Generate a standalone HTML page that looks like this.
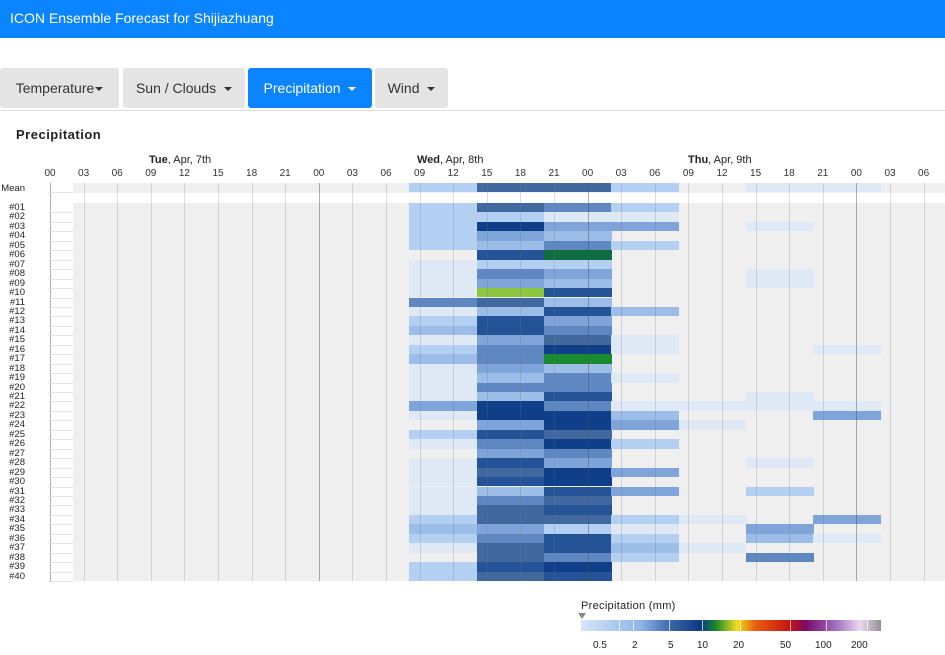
<!DOCTYPE html>
<html><head><meta charset="utf-8"><style>
body{margin:0;width:945px;height:655px;overflow:hidden;background:#fff;font-family:"Liberation Sans",sans-serif;position:relative}
.hdr{position:absolute;left:0;top:0;width:945px;height:38px;background:#0a84ff;color:#fff;font-size:14px;line-height:37px;padding-left:10px;box-sizing:border-box}
.tab{position:absolute;top:68px;height:40px;line-height:40px;background:#e4e4e4;color:#333;font-size:14px;text-align:center;border-radius:3px}
.tab.on{background:#0a84ff;color:#fff}
.car{display:inline-block;width:0;height:0;border-left:4px solid transparent;border-right:4px solid transparent;border-top:4px solid currentColor;vertical-align:middle;margin-left:4px}
.rule{position:absolute;left:0;top:110px;width:945px;height:1px;background:#ddd}
.t{position:absolute;font-size:11px;color:#222;white-space:nowrap}
.h{position:absolute;top:168px;font-size:10px;color:#333;width:30px;margin-left:-15px;text-align:center}
.rl{position:absolute;left:0;width:25px;text-align:right;font-size:9.5px;color:#222;line-height:9.45px}
#g{position:absolute;left:73px;top:183px;width:872px;height:398px;background:#efefef}
.c{position:absolute;height:9.45px}
.vl{position:absolute;top:183px;height:398px;width:1px;background:rgba(120,120,120,.25)}
</style></head><body>
<div class="hdr">ICON Ensemble Forecast for Shijiazhuang</div>
<div class="tab" style="left:0;width:119px">Temperature<span class="car" style="margin-left:1px"></span></div>
<div class="tab" style="left:123px;width:122px">Sun / Clouds <span class="car"></span></div>
<div class="tab on" style="left:248px;width:124px">Precipitation <span class="car"></span></div>
<div class="tab" style="left:375px;width:73px">Wind <span class="car"></span></div>
<div class="rule"></div>
<div class="t" style="left:16px;top:127px;font-size:13px;font-weight:bold;letter-spacing:.5px">Precipitation</div>
<div class="t" style="left:149px;top:154px"><b>Tue</b>, Apr, 7th</div>
<div class="t" style="left:417px;top:154px"><b>Wed</b>, Apr, 8th</div>
<div class="t" style="left:688px;top:154px"><b>Thu</b>, Apr, 9th</div>
<div id="hrs"><div class="h" style="left:50px">00</div><div class="h" style="left:83.6px">03</div><div class="h" style="left:117.2px">06</div><div class="h" style="left:150.8px">09</div><div class="h" style="left:184.4px">12</div><div class="h" style="left:218px">15</div><div class="h" style="left:251.6px">18</div><div class="h" style="left:285.2px">21</div><div class="h" style="left:318.8px">00</div><div class="h" style="left:352.4px">03</div><div class="h" style="left:386px">06</div><div class="h" style="left:419.6px">09</div><div class="h" style="left:453.2px">12</div><div class="h" style="left:486.8px">15</div><div class="h" style="left:520.4px">18</div><div class="h" style="left:554px">21</div><div class="h" style="left:587.6px">00</div><div class="h" style="left:621.2px">03</div><div class="h" style="left:654.8px">06</div><div class="h" style="left:688.4px">09</div><div class="h" style="left:722px">12</div><div class="h" style="left:755.6px">15</div><div class="h" style="left:789.2px">18</div><div class="h" style="left:822.8px">21</div><div class="h" style="left:856.4px">00</div><div class="h" style="left:890px">03</div><div class="h" style="left:923.6px">06</div></div>
<div id="g"></div>
<div style="position:absolute;left:48px;top:193px;width:897px;height:10px;background:#fff"></div>
<div id="cells"></div>
<div id="vls"></div>
<div class="rl" style="top:184px">Mean</div>
<div id="labels">
<div class="rl" style="top:203px">#01</div><div class="rl" style="top:212.45px">#02</div><div class="rl" style="top:221.9px">#03</div><div class="rl" style="top:231.35px">#04</div><div class="rl" style="top:240.8px">#05</div><div class="rl" style="top:250.25px">#06</div><div class="rl" style="top:259.7px">#07</div><div class="rl" style="top:269.15px">#08</div><div class="rl" style="top:278.6px">#09</div><div class="rl" style="top:288.05px">#10</div><div class="rl" style="top:297.5px">#11</div><div class="rl" style="top:306.95px">#12</div><div class="rl" style="top:316.4px">#13</div><div class="rl" style="top:325.85px">#14</div><div class="rl" style="top:335.3px">#15</div><div class="rl" style="top:344.75px">#16</div><div class="rl" style="top:354.2px">#17</div><div class="rl" style="top:363.65px">#18</div><div class="rl" style="top:373.1px">#19</div><div class="rl" style="top:382.55px">#20</div><div class="rl" style="top:392px">#21</div><div class="rl" style="top:401.45px">#22</div><div class="rl" style="top:410.9px">#23</div><div class="rl" style="top:420.35px">#24</div><div class="rl" style="top:429.8px">#25</div><div class="rl" style="top:439.25px">#26</div><div class="rl" style="top:448.7px">#27</div><div class="rl" style="top:458.15px">#28</div><div class="rl" style="top:467.6px">#29</div><div class="rl" style="top:477.05px">#30</div><div class="rl" style="top:486.5px">#31</div><div class="rl" style="top:495.95px">#32</div><div class="rl" style="top:505.4px">#33</div><div class="rl" style="top:514.85px">#34</div><div class="rl" style="top:524.3px">#35</div><div class="rl" style="top:533.75px">#36</div><div class="rl" style="top:543.2px">#37</div><div class="rl" style="top:552.65px">#38</div><div class="rl" style="top:562.1px">#39</div><div class="rl" style="top:571.55px">#40</div>
</div>
<div class="t" style="left:581px;top:600px;font-size:11px;letter-spacing:.3px">Precipitation (mm)</div>
<div style="position:absolute;left:578px;top:613px;width:0;height:0;border-left:4px solid transparent;border-right:4px solid transparent;border-top:6px solid #888"></div>
<div style="position:absolute;left:581px;top:620px;width:300px;height:11px;background:linear-gradient(90deg,#d6e6fa 0%,#8db4e6 20%,#3a66a8 30%,#0c3a80 40%,#1a8a2a 45%,#f0e020 52%,#e86010 58%,#c81010 70%,#7a0a6a 75%,#a070c0 85%,#ecd8f0 93%,#909090 100%)"></div>
<div id="tk"></div>
<div class="t" style="left:593px;top:640px;font-size:10px">0.5</div>
<div class="t" style="left:632px;top:640px;font-size:10px">2</div>
<div class="t" style="left:668px;top:640px;font-size:10px">5</div>
<div class="t" style="left:697px;top:640px;font-size:10px">10</div>
<div class="t" style="left:733px;top:640px;font-size:10px">20</div>
<div class="t" style="left:780px;top:640px;font-size:10px">50</div>
<div class="t" style="left:815px;top:640px;font-size:10px">100</div>
<div class="t" style="left:851px;top:640px;font-size:10px">200</div>
<script>
var P={0:null,1:'#dfe9f6',2:'#b3cff1',3:'#9bbde8',4:'#7ea4d9',5:'#5f88c3',6:'#41699f',7:'#245398',8:'#0f3f88',G:'#0e6e40',Y:'#8cc63e',H:'#1a8a30'};
var D=["2662011","2652","2211","2844010","243","2352","07G","122","1540010","1430010","1Y7","563","1373","274","375","1461","25810010","35H","143","1351","155","1370010","48511115","1883004","0484100","276","1582","045","1740010","1684","178","1374020","156","167","2662104","342104","2572031","1673100","0652050","278","267"];
var X=[409,476.6,544,611.3,678.6,746,813.3,880.6],h='';
D.forEach(function(r,i){var y=i==0?183:203+(i-1)*9.45;for(var j=0;j<r.length;j++){var c=P[r[j]];if(c)h+='<div class="c" style="left:'+X[j]+'px;top:'+y+'px;width:'+(X[j+1]-X[j]+0.5)+'px;background:'+c+'"></div>';}});
document.getElementById('cells').innerHTML=h;
var v='';for(var k=0;k<27;k++){var x=50+k*33.6;var dk=(k%8==0);v+='<div class="vl" style="left:'+x+'px;'+(dk?'background:rgba(80,80,80,.45)':'')+'"></div>';}
for(var i=0;i<41;i++){var y=i==0?192:203+i*9.45;v+='<div style="position:absolute;left:48px;top:'+y+'px;width:25px;height:1px;background:#e2e2e2"></div>';}
document.getElementById('vls').innerHTML=v;
var t='';[0.1,0.2,0.4,0.6,0.8,0.95].forEach(function(f){});[619,633,669,702,740,790,826,867].forEach(function(x){t+='<div style="position:absolute;left:'+x+'px;top:620px;width:1px;height:11px;background:rgba(255,255,255,.7)"></div>'});
document.getElementById('tk').innerHTML=t;
</script>
</body></html>
